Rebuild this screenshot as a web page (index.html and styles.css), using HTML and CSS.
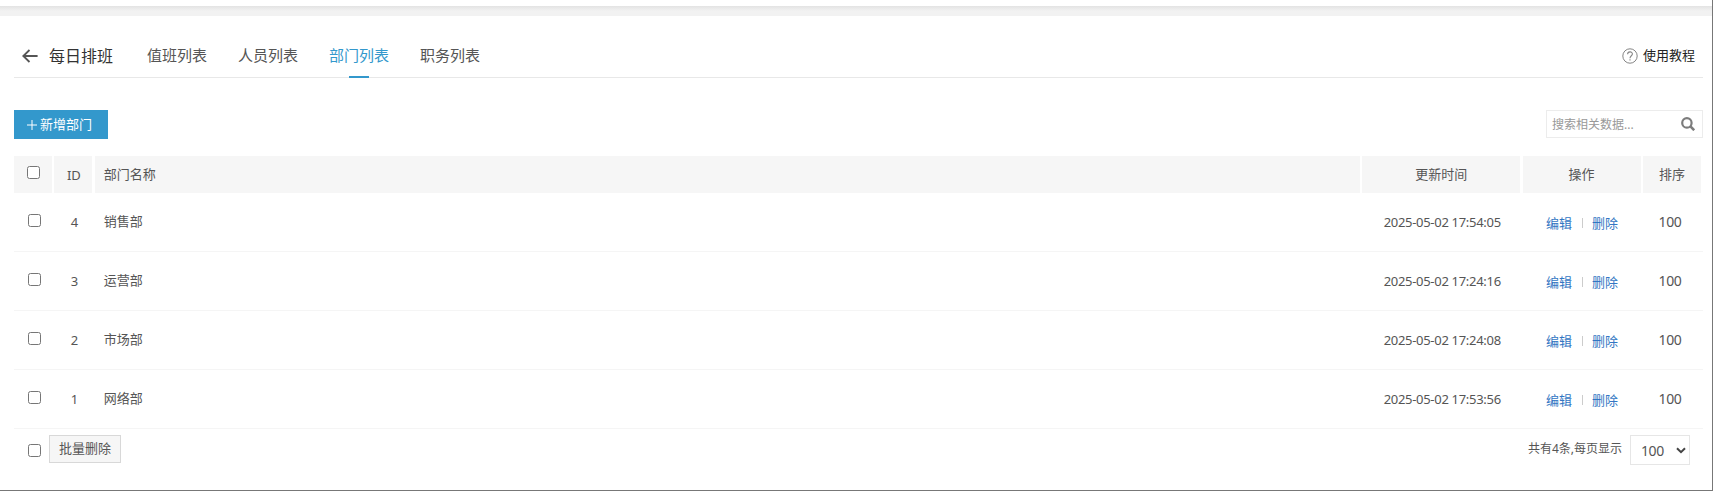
FILE: index.html
```
<!DOCTYPE html>
<html lang="zh-CN">
<head>
  <meta charset="UTF-8">
  <meta name="viewport" content="width=device-width, initial-scale=1.0">
  <title>部门列表</title>
  <link rel="stylesheet" href="styles.css">
</head>
<body>

  <div class="page">
    <div class="header">
      <svg class="back" width="16" height="14" viewBox="0 0 16 14"><path d="M7.5 1 L1.3 7 L7.5 13 M1.3 7 H15.6" fill="none" stroke="#555" stroke-width="1.8"/></svg>
      <h1>每日排班</h1>
      <ul class="tabs">
        <li>值班列表</li>
        <li>人员列表</li>
        <li class="active">部门列表</li>
        <li>职务列表</li>
      </ul>
      <div class="help">
        <svg width="16" height="16" viewBox="0 0 16 16" fill="none" stroke="#858585"><circle cx="8" cy="8" r="7.2"/><path d="M5.6 6.3 C5.6 3.1 10.4 3.1 10.4 6 C10.4 7.8 8 7.7 8 10.2 M8 11.3 V12.5" stroke-width="1.1"/></svg>
        <span>使用教程</span>
      </div>
    </div>

    <div class="toolbar">
      <button class="add-btn"><svg width="10" height="10" viewBox="0 0 10 10"><path d="M5 0 V10 M0 5 H10" stroke="#fff" stroke-width="1"/></svg><span>新增部门</span></button>
      <div class="search">
        <input type="text" placeholder="搜索相关数据...">
        <svg width="14" height="14" viewBox="0 0 14 14" fill="none" stroke="#7c7c7c"><circle cx="5.9" cy="5.9" r="4.7" stroke-width="2.2"/><path d="M9.2 9.2 L13.2 13.2" stroke-width="2.6"/></svg>
      </div>
    </div>

    <div class="table">
      <div class="row head">
        <div><input type="checkbox"></div>
        <div class="id">ID</div>
        <div class="name">部门名称</div>
        <div>更新时间</div>
        <div>操作</div>
        <div>排序</div>
      </div>
      <div class="row">
        <div><input type="checkbox"></div>
        <div class="num">4</div>
        <div class="name">销售部</div>
        <div class="num">2025-05-02 17:54:05</div>
        <div class="actions"><a>编辑</a><i></i><a>删除</a></div>
        <div class="sort">100</div>
      </div>
      <div class="row">
        <div><input type="checkbox"></div>
        <div class="num">3</div>
        <div class="name">运营部</div>
        <div class="num">2025-05-02 17:24:16</div>
        <div class="actions"><a>编辑</a><i></i><a>删除</a></div>
        <div class="sort">100</div>
      </div>
      <div class="row">
        <div><input type="checkbox"></div>
        <div class="num">2</div>
        <div class="name">市场部</div>
        <div class="num">2025-05-02 17:24:08</div>
        <div class="actions"><a>编辑</a><i></i><a>删除</a></div>
        <div class="sort">100</div>
      </div>
      <div class="row">
        <div><input type="checkbox"></div>
        <div class="num">1</div>
        <div class="name">网络部</div>
        <div class="num">2025-05-02 17:53:56</div>
        <div class="actions"><a>编辑</a><i></i><a>删除</a></div>
        <div class="sort">100</div>
      </div>
    </div>

    <div class="footer">
      <input type="checkbox">
      <button class="batch-btn">批量删除</button>
      <span class="total">共有4条,每页显示</span>
      <div class="page-size">
        <span>100</span>
        <svg width="10" height="7" viewBox="0 0 10 7"><path d="M1 1.2 L5 5.2 L9 1.2" fill="none" stroke="#444" stroke-width="2"/></svg>
      </div>
    </div>
  </div>

</body>
</html>
```
FILE: styles.css
```
* {
  box-sizing: border-box;
}
body {
  margin: 0;
  height: 491px;
  overflow: hidden;
  padding-top: 6px;
  background-color: #fff;
  border-right: 1px solid #777;
  border-bottom: 1px solid #777;
  font-family: "Noto Sans", "Noto Sans CJK SC", sans-serif;
  font-size: 13px;
  color: #555;
}
.page {
  padding: 0 9px 0 14px;
}
.page::before {
  content: "";
  display: block;
  height: 10px;
  margin: 0 -9px 0 -14px;
  background: linear-gradient(#e3e3e3, #f2f2f2 50%);
}
.header {
  display: flex;
  align-items: center;
  height: 62px;
  padding: 18px 8px 0 8px;
  border-bottom: 1px solid #e8e8e8;
}
h1 {
  margin: 0 0 0 11px;
  font-size: 16px;
  line-height: 24px;
  font-weight: normal;
  color: #333;
}
.tabs {
  display: flex;
  gap: 31px;
  align-self: stretch;
  margin: 0 0 0 34px;
  padding: 0;
  list-style: none;
  font-size: 15px;
  line-height: 42px;
}
.tabs li {
  width: 60px;
  height: 44px;
}
.tabs .active {
  color: #3398cc;
}
.tabs .active::after {
  content: "";
  display: block;
  width: 20px;
  height: 2px;
  margin: 0 auto;
  background-color: #3398cc;
}
.help {
  display: flex;
  align-items: center;
  gap: 5px;
  margin-left: auto;
  color: #222;
}
.help span {
  padding-bottom: 2px;
}
.toolbar {
  display: flex;
  justify-content: space-between;
  margin-top: 32px;
}
button {
  font-family: inherit;
  font-size: 13px;
  padding: 0;
}
.add-btn {
  display: flex;
  align-items: center;
  gap: 3px;
  width: 94px;
  height: 29px;
  padding-left: 13px;
  border: none;
  background-color: #3398cc;
  color: #fff;
}
.add-btn span {
  padding-bottom: 3px;
}
.search {
  display: flex;
  align-items: center;
  width: 157px;
  height: 28px;
  padding: 0 7px 0 5px;
  border: 1px solid #ececec;
}
.search input {
  flex: 1;
  min-width: 0;
  padding: 0;
  border: none;
  outline: none;
  font-family: inherit;
  font-size: 12px;
}
.search input::placeholder {
  color: #999;
}
.table {
  margin-top: 17px;
}
.row {
  display: grid;
  grid-template-columns: 38px 38px 1fr 158px 118px 58px;
  column-gap: 2.4px;
  height: 59px;
  padding-right: 2px;
  border-bottom: 1px solid #f5f5f5;
}
.row > div {
  display: flex;
  align-items: center;
  justify-content: center;
}
.row > .name {
  justify-content: flex-start;
  padding: 0 0 3px 9px;
}
.row.head {
  height: 37px;
  border: none;
}
.row.head > div {
  padding-bottom: 3px;
  background-color: #f6f6f6;
}
.row.head > .id {
  padding: 0 0 0 1px;
}
.row.head > .name {
  padding-left: 9px;
}
input[type="checkbox"] {
  width: 13px;
  height: 13px;
  margin: 0 0 4px 2px;
}
.head input[type="checkbox"] {
  margin: 0 0 1px 1px;
}
.row > .num {
  padding-left: 2px;
  letter-spacing: -0.3px;
}
.row > .sort {
  font-size: 14px;
  letter-spacing: -0.4px;
  padding: 0 4px 2px 0;
}
.row > .actions {
  padding: 1px 0 0 1px;
}
.actions a {
  color: #3276c3;
}
.actions i {
  width: 1px;
  height: 10px;
  margin: 0 9px 0 10px;
  background-color: #ccc;
}
.footer {
  display: flex;
  align-items: flex-start;
  padding: 6px 13px 0 14px;
}
.footer input[type="checkbox"] {
  margin: 9px 8px 0 0;
}
.batch-btn {
  width: 72px;
  height: 28px;
  padding-bottom: 3px;
  border: 1px solid #d8d8d8;
  background-color: #f6f6f6;
  color: #555;
}
.total {
  margin-left: auto;
  font-size: 12px;
  line-height: 27px;
}
.page-size {
  display: flex;
  align-items: center;
  justify-content: space-between;
  width: 60px;
  height: 30px;
  margin-left: 8px;
  padding: 0 3px 0 10px;
  border: 1px solid #e6e6e6;
  font-size: 14px;
  letter-spacing: -0.4px;
}
```
